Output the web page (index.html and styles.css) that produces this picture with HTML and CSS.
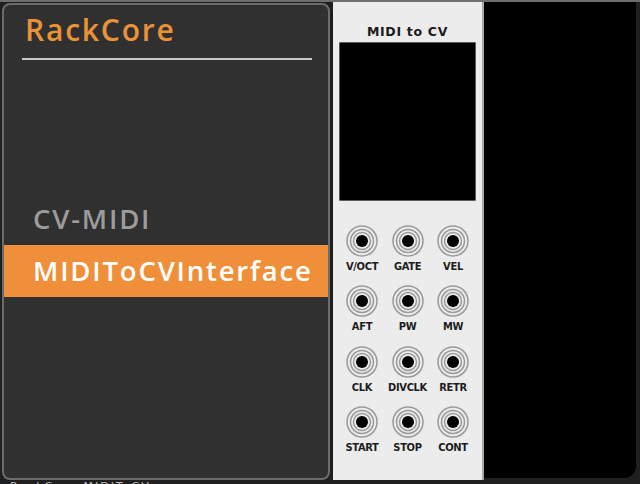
FILE: index.html
```html
<!DOCTYPE html>
<html>
<head>
<meta charset="utf-8">
<link rel="stylesheet" href="styles.css">
</head>
<body>
<div class="app">
  <div class="topline"></div>
  <div class="main">
    <div class="menu">
      <div class="menu-head">
        <div class="brand">RackCore</div>
        <div class="rule"></div>
      </div>
      <div class="menu-list">
        <div class="item">CV-MIDI</div>
        <div class="item active">MIDIToCVInterface</div>
      </div>
    </div>
    <div class="module">
      <div class="mod-title">MIDI to CV</div>
      <div class="screen"></div>
      <div class="jacks">
        <div class="jack"><svg viewBox="0 0 32 32" width="32" height="32"><circle cx="16" cy="16" r="15" class="ring"/><circle cx="16" cy="16" r="11.5" class="ring"/><circle cx="16" cy="16" r="8.5" class="ring"/><circle cx="16" cy="16" r="6" class="hole"/></svg><span>V/OCT</span></div>
        <div class="jack"><svg viewBox="0 0 32 32" width="32" height="32"><circle cx="16" cy="16" r="15" class="ring"/><circle cx="16" cy="16" r="11.5" class="ring"/><circle cx="16" cy="16" r="8.5" class="ring"/><circle cx="16" cy="16" r="6" class="hole"/></svg><span>GATE</span></div>
        <div class="jack"><svg viewBox="0 0 32 32" width="32" height="32"><circle cx="16" cy="16" r="15" class="ring"/><circle cx="16" cy="16" r="11.5" class="ring"/><circle cx="16" cy="16" r="8.5" class="ring"/><circle cx="16" cy="16" r="6" class="hole"/></svg><span>VEL</span></div>
        <div class="jack"><svg viewBox="0 0 32 32" width="32" height="32"><circle cx="16" cy="16" r="15" class="ring"/><circle cx="16" cy="16" r="11.5" class="ring"/><circle cx="16" cy="16" r="8.5" class="ring"/><circle cx="16" cy="16" r="6" class="hole"/></svg><span>AFT</span></div>
        <div class="jack"><svg viewBox="0 0 32 32" width="32" height="32"><circle cx="16" cy="16" r="15" class="ring"/><circle cx="16" cy="16" r="11.5" class="ring"/><circle cx="16" cy="16" r="8.5" class="ring"/><circle cx="16" cy="16" r="6" class="hole"/></svg><span>PW</span></div>
        <div class="jack"><svg viewBox="0 0 32 32" width="32" height="32"><circle cx="16" cy="16" r="15" class="ring"/><circle cx="16" cy="16" r="11.5" class="ring"/><circle cx="16" cy="16" r="8.5" class="ring"/><circle cx="16" cy="16" r="6" class="hole"/></svg><span>MW</span></div>
        <div class="jack"><svg viewBox="0 0 32 32" width="32" height="32"><circle cx="16" cy="16" r="15" class="ring"/><circle cx="16" cy="16" r="11.5" class="ring"/><circle cx="16" cy="16" r="8.5" class="ring"/><circle cx="16" cy="16" r="6" class="hole"/></svg><span>CLK</span></div>
        <div class="jack"><svg viewBox="0 0 32 32" width="32" height="32"><circle cx="16" cy="16" r="15" class="ring"/><circle cx="16" cy="16" r="11.5" class="ring"/><circle cx="16" cy="16" r="8.5" class="ring"/><circle cx="16" cy="16" r="6" class="hole"/></svg><span>DIVCLK</span></div>
        <div class="jack"><svg viewBox="0 0 32 32" width="32" height="32"><circle cx="16" cy="16" r="15" class="ring"/><circle cx="16" cy="16" r="11.5" class="ring"/><circle cx="16" cy="16" r="8.5" class="ring"/><circle cx="16" cy="16" r="6" class="hole"/></svg><span>RETR</span></div>
        <div class="jack"><svg viewBox="0 0 32 32" width="32" height="32"><circle cx="16" cy="16" r="15" class="ring"/><circle cx="16" cy="16" r="11.5" class="ring"/><circle cx="16" cy="16" r="8.5" class="ring"/><circle cx="16" cy="16" r="6" class="hole"/></svg><span>START</span></div>
        <div class="jack"><svg viewBox="0 0 32 32" width="32" height="32"><circle cx="16" cy="16" r="15" class="ring"/><circle cx="16" cy="16" r="11.5" class="ring"/><circle cx="16" cy="16" r="8.5" class="ring"/><circle cx="16" cy="16" r="6" class="hole"/></svg><span>STOP</span></div>
        <div class="jack"><svg viewBox="0 0 32 32" width="32" height="32"><circle cx="16" cy="16" r="15" class="ring"/><circle cx="16" cy="16" r="11.5" class="ring"/><circle cx="16" cy="16" r="8.5" class="ring"/><circle cx="16" cy="16" r="6" class="hole"/></svg><span>CONT</span></div>
      </div>
    </div>
    <div class="rack"></div>
  </div>
  <div class="footer">RackCore MIDIToCV</div>
</div>
</body>
</html>
```

FILE: styles.css
```css
html, body {
  margin: 0;
  padding: 0;
  background: #1f1f1f;
  overflow: hidden;
}
.app {
  width: 640px;
  height: 484px;
  overflow: hidden;
  display: flex;
  flex-direction: column;
}
.topline {
  height: 2px;
  background: #6e6e6e;
  flex: none;
}
.main {
  display: flex;
  height: 478px;
  flex: none;
}
.menu {
  margin: 1px 0 0 2px;
  width: 324px;
  height: 473px;
  background: #303030;
  border: 2px solid #6c6c6c;
  border-radius: 8px;
  display: flex;
  flex-direction: column;
  box-sizing: content-box;
}
.menu-head {
  padding: 8px 16px 0 18px;
}
.brand {
  font-family: "Open Sans", sans-serif;
  font-weight: 600;
  font-size: 30px;
  line-height: 34px;
  letter-spacing: 1.8px;
  color: #ea9238;
  padding-left: 3px;
}
.rule {
  margin-top: 11px;
  height: 2px;
  background: #c9c9c9;
}
.menu-list {
  margin-top: 133px;
  display: flex;
  flex-direction: column;
}
.item {
  height: 52px;
  line-height: 52px;
  padding-left: 29px;
  font-family: "Open Sans", sans-serif;
  font-weight: 600;
  font-size: 27.5px;
  letter-spacing: 1.8px;
  color: #9c9c9c;
  white-space: nowrap;
}
.item.active {
  background: #ef8f3a;
  color: #ffffff;
}
.module {
  margin-left: 3px;
  width: 149px;
  background: #ececec;
  border-right: 2px solid #a8a8a8;
  display: flex;
  flex-direction: column;
  align-items: center;
}
.mod-title {
  margin-top: 22px;
  font-family: "DejaVu Sans", sans-serif;
  font-weight: bold;
  font-size: 12.5px;
  line-height: 16px;
  letter-spacing: 0.7px;
  color: #1a1a1a;
}
.screen {
  margin-top: 2px;
  width: 135px;
  height: 157px;
  background: #000;
  border: 1px solid #5a5a5a;
  border-radius: 1px;
}
.jacks {
  margin-top: 24px;
  display: grid;
  grid-template-columns: repeat(3, 45.5px);
  row-gap: 12px;
}
.jack {
  display: flex;
  flex-direction: column;
  align-items: center;
}
.jack svg {
  display: block;
}
.ring {
  fill: none;
  stroke: #9a9a9a;
  stroke-width: 1.5;
}
.hole {
  fill: #000;
}
.jack span {
  margin-top: 4px;
  font-family: "DejaVu Sans Condensed", "DejaVu Sans", sans-serif;
  font-weight: bold;
  font-size: 11px;
  line-height: 12.3px;
  color: #1c1c1c;
  letter-spacing: -0.3px;
  white-space: nowrap;
}
.rack {
  width: 152px;
  height: 476px;
  background: #000;
  border-bottom-right-radius: 12px;
}
.footer {
  margin-left: 10px;
  margin-top: 1px;
  font-family: "DejaVu Sans", sans-serif;
  font-size: 11px;
  line-height: 12px;
  color: #bdbdbd;
  letter-spacing: 2px;
}
```
